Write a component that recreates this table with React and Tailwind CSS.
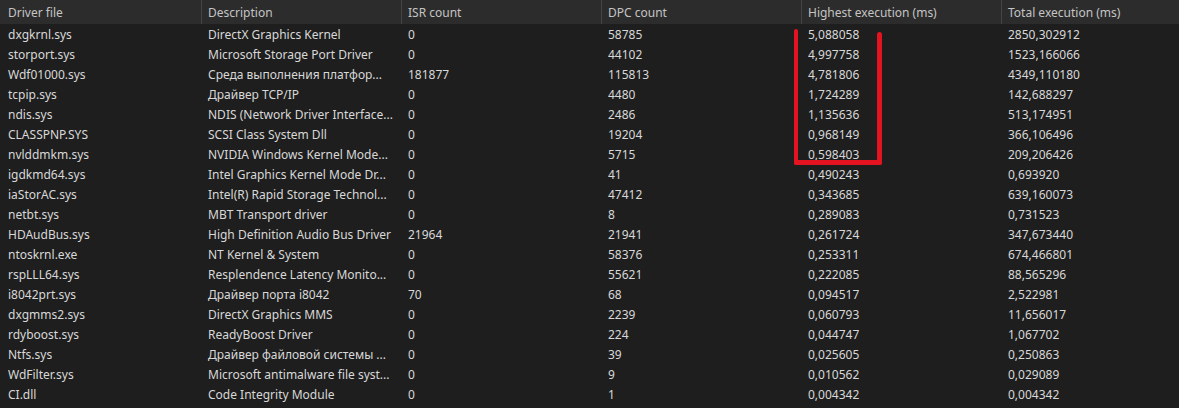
const columns = ['Driver file', 'Description', 'ISR count', 'DPC count', 'Highest execution (ms)', 'Total execution (ms)'];

const rows = [
  ['dxgkrnl.sys', 'DirectX Graphics Kernel', '0', '58785', '5,088058', '2850,302912'],
  ['storport.sys', 'Microsoft Storage Port Driver', '0', '44102', '4,997758', '1523,166066'],
  ['Wdf01000.sys', 'Среда выполнения платфор...', '181877', '115813', '4,781806', '4349,110180'],
  ['tcpip.sys', 'Драйвер TCP/IP', '0', '4480', '1,724289', '142,688297'],
  ['ndis.sys', 'NDIS (Network Driver Interface...', '0', '2486', '1,135636', '513,174951'],
  ['CLASSPNP.SYS', 'SCSI Class System Dll', '0', '19204', '0,968149', '366,106496'],
  ['nvlddmkm.sys', 'NVIDIA Windows Kernel Mode...', '0', '5715', '0,598403', '209,206426'],
  ['igdkmd64.sys', 'Intel Graphics Kernel Mode Dr...', '0', '41', '0,490243', '0,693920'],
  ['iaStorAC.sys', 'Intel(R) Rapid Storage Technol...', '0', '47412', '0,343685', '639,160073'],
  ['netbt.sys', 'MBT Transport driver', '0', '8', '0,289083', '0,731523'],
  ['HDAudBus.sys', 'High Definition Audio Bus Driver', '21964', '21941', '0,261724', '347,673440'],
  ['ntoskrnl.exe', 'NT Kernel & System', '0', '58376', '0,253311', '674,466801'],
  ['rspLLL64.sys', 'Resplendence Latency Monito...', '0', '55621', '0,222085', '88,565296'],
  ['i8042prt.sys', 'Драйвер порта i8042', '70', '68', '0,094517', '2,522981'],
  ['dxgmms2.sys', 'DirectX Graphics MMS', '0', '2239', '0,060793', '11,656017'],
  ['rdyboost.sys', 'ReadyBoost Driver', '0', '224', '0,044747', '1,067702'],
  ['Ntfs.sys', 'Драйвер файловой системы ...', '0', '39', '0,025605', '0,250863'],
  ['WdFilter.sys', 'Microsoft antimalware file syst...', '0', '9', '0,010562', '0,029089'],
  ['CI.dll', 'Code Integrity Module', '0', '1', '0,004342', '0,004342'],
];

const grid = 'grid grid-cols-[201px_200px_200px_200px_200px_1fr]';

export default function App() {
  return (
    <div className="relative w-[1179px] h-[408px] overflow-hidden bg-[#1e1e1e] text-[12px] font-['Segoe_UI','Noto_Sans','Open_Sans',sans-serif]">
      <div className={`${grid} h-6 bg-[#2c2c2c] text-[#c4c4c4]`}>
        {columns.map((c, i) => (
          <div key={c} className={`flex items-center pt-px ${i > 0 ? 'pl-[6px] border-l border-[#454545]' : 'pl-2'}`}>
            {c}
          </div>
        ))}
      </div>

      {rows.map(r => (
        <div key={r[0]} className={`${grid} h-5 text-[#d8d8d8]`}>
          {r.map((v, i) => (
            <div key={i} className={`flex items-center pt-[2px] whitespace-nowrap overflow-hidden ${i > 0 ? 'pl-[7px]' : 'pl-2'}`}>
              {v}
            </div>
          ))}
        </div>
      ))}

      {/* hand-drawn red highlight */}
      <div className="absolute left-[794px] top-[29px] w-[4px] h-[136px] bg-[#e3141f] rounded-sm" />
      <div className="absolute left-[794px] top-[160px] w-[88px] h-[5px] bg-[#e3141f] rounded-sm" />
      <div className="absolute left-[877px] top-[32px] w-[5px] h-[133px] bg-[#e3141f] rounded-sm" />
    </div>
  );
}
